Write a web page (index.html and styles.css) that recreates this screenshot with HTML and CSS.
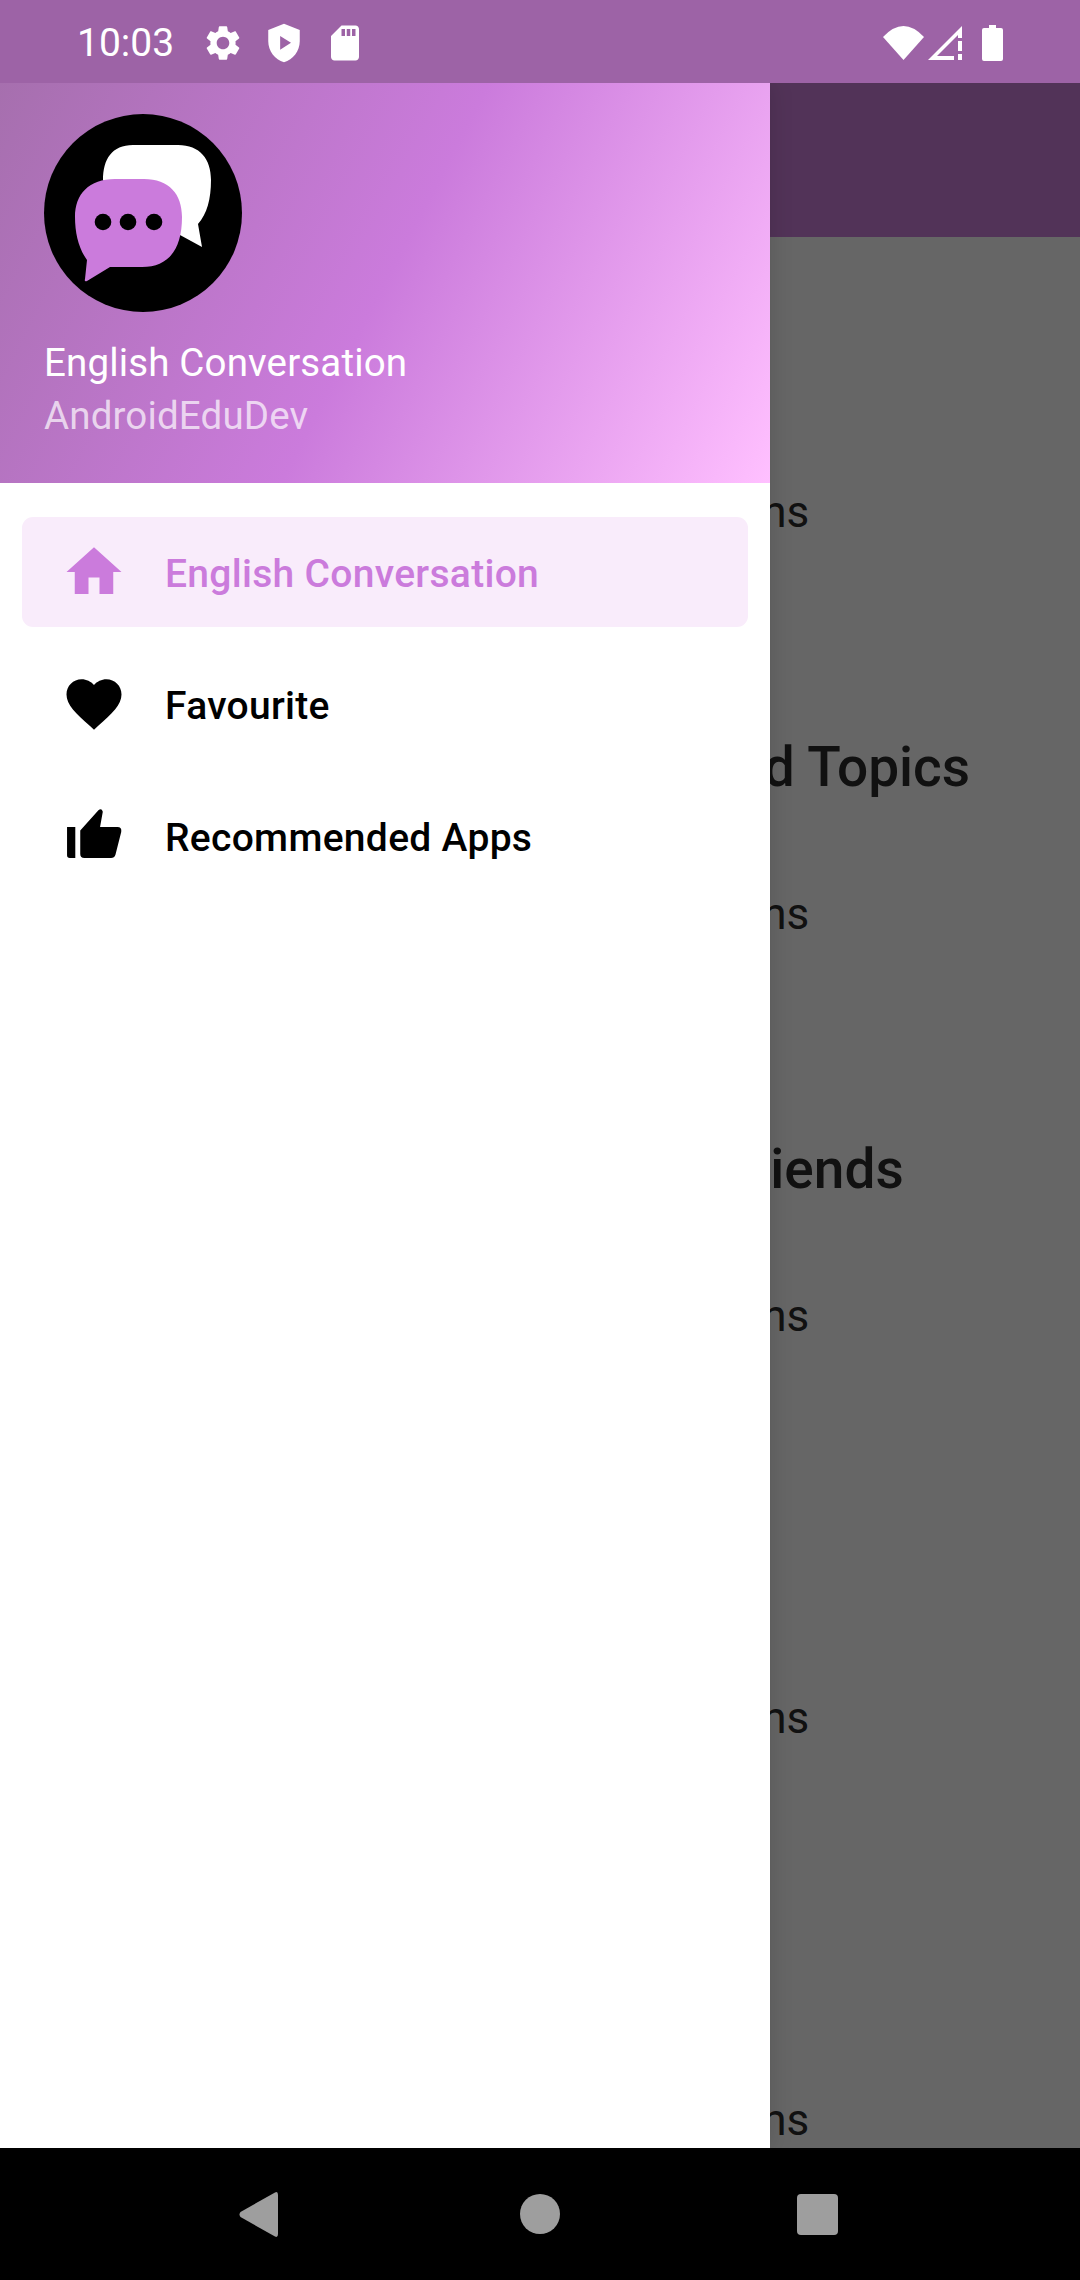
FILE: index.html
```html
<!DOCTYPE html>
<html lang="en">
<head>
    <meta charset="UTF-8">
    <meta name="viewport" content="width=device-width, initial-scale=1.0">
    <title>English Conversation</title>
    <link rel="stylesheet" href="styles.css">
</head>
<body>
    <div class="phone">
        <!-- Status bar -->
        <div class="status-bar">
            <span class="clock">10:03</span>
            <svg class="status-icon" viewBox="0 0 24 24"><path d="M19.14 12.94c.04-.3.06-.61.06-.94 0-.32-.02-.64-.07-.94l2.03-1.58c.18-.14.23-.41.12-.61l-1.92-3.32c-.12-.22-.37-.29-.59-.22l-2.39.96c-.5-.38-1.03-.7-1.62-.94l-.36-2.54c-.04-.24-.24-.41-.48-.41h-3.84c-.24 0-.43.17-.47.41l-.36 2.54c-.59.24-1.13.57-1.62.94l-2.39-.96c-.22-.08-.47 0-.59.22L2.74 8.87c-.12.21-.08.47.12.61l2.03 1.58c-.05.3-.09.63-.09.94s.02.64.07.94l-2.03 1.58c-.18.14-.23.41-.12.61l1.92 3.32c.12.22.37.29.59.22l2.39-.96c.5.38 1.03.7 1.62.94l.36 2.54c.05.24.24.41.48.41h3.84c.24 0 .44-.17.47-.41l.36-2.54c.59-.24 1.13-.56 1.62-.94l2.39.96c.22.08.47 0 .59-.22l1.92-3.32c.12-.22.07-.47-.12-.61l-2.01-1.58zM12 15.6c-1.98 0-3.6-1.62-3.6-3.6s1.62-3.6 3.6-3.6 3.6 1.62 3.6 3.6-1.62 3.6-3.6 3.6z"/></svg>
            <svg class="status-icon" viewBox="0 0 24 24"><path fill-rule="evenodd" d="M12 1L3 4.500v6.500c0 5.500 3.800 10.500 9 12 5.200-1.500 9-6.500 9-12V4.500zM9.800 8v7.800l6.200-3.900z"/></svg>
            <svg class="status-icon" viewBox="0 0 24 24"><path d="M18 2h-8L4 8v12c0 1.100.900 2 2 2h12c1.100 0 2-.900 2-2V4c0-1.100-.900-2-2-2zm-6 6h-2V4h2v4zm3 0h-2V4h2v4zm3 0h-2V4h2v4z"/></svg>
            <div class="status-right">
                <svg class="wifi" viewBox="0 0 41 34"><path d="M0 11Q20.500-11 41 11L20.500 34z"/></svg>
                <svg class="signal" viewBox="0 0 34 34"><path d="M0 34L34 0V12H30V9L9 30H26V34z"/><rect x="30" y="15" width="4" height="10"/><rect x="30" y="28" width="4" height="6"/></svg>
                <svg class="battery" viewBox="0 0 21 36"><path d="M7 0h7v3h5q2 0 2 2v29q0 2-2 2H2q-2 0-2-2V5q0-2 2-2h5z"/></svg>
            </div>
        </div>

        <div class="app-bar"></div>

        <!-- Lesson list behind the drawer -->
        <div class="lessons">
            <div class="lesson">
                <div class="lesson-title">Family</div>
                <div class="lesson-count">50 Questions</div>
            </div>
            <div class="lesson">
                <div class="lesson-title">Advanced Topics</div>
                <div class="lesson-count">50 Questions</div>
            </div>
            <div class="lesson">
                <div class="lesson-title">Online Friends</div>
                <div class="lesson-count">50 Questions</div>
            </div>
            <div class="lesson">
                <div class="lesson-title">At Work</div>
                <div class="lesson-count">50 Questions</div>
            </div>
            <div class="lesson">
                <div class="lesson-title">Travel</div>
                <div class="lesson-count">50 Questions</div>
            </div>
        </div>

        <div class="scrim"></div>

        <!-- Navigation drawer -->
        <div class="drawer">
            <div class="drawer-header">
                <svg class="avatar" viewBox="0 0 198 198">
                    <circle cx="99" cy="99" r="99" fill="#000"/>
                    <path fill="#fff" d="M89 31H134C156 31 167 45 167 66C167 85 163 100 154 110L158 133L125 115L70 80L59 66C59 45 68 31 89 31Z"/>
                    <path fill="#cb7bdc" d="M71 65H100C125 65 138 80 138 103C138 135 125 153 98 153H66L43 167Q40 168 41 165L43 146C35 135 31 120 31 103C31 80 45 65 71 65Z"/>
                    <circle cx="59" cy="108" r="8.300"/>
                    <circle cx="84" cy="108" r="8.300"/>
                    <circle cx="110" cy="108" r="8.300"/>
                </svg>
                <div class="app-name">English Conversation</div>
                <div class="app-author">AndroidEduDev</div>
            </div>
            <div class="menu">
                <div class="menu-item active">
                    <svg class="menu-icon" viewBox="0 0 24 24"><path d="M10 20v-6h4v6h5v-8h3L12 3 2 12h3v8z"/></svg>
                    <span class="menu-label">English Conversation</span>
                </div>
                <div class="menu-item">
                    <svg class="menu-icon" viewBox="0 0 24 24"><path d="M12 21.350l-1.450-1.320C5.400 15.360 2 12.280 2 8.500 2 5.420 4.420 3 7.500 3c1.740 0 3.410.810 4.500 2.090C13.090 3.810 14.760 3 16.500 3 19.580 3 22 5.420 22 8.500c0 3.780-3.400 6.860-8.550 11.540L12 21.350z"/></svg>
                    <span class="menu-label">Favourite</span>
                </div>
                <div class="menu-item">
                    <svg class="menu-icon" viewBox="0 0 24 24"><path d="M2.200 8.700h3V20h-2a1 1 0 0 1-1-1zM7 10L13.600 2.600Q14.800 1.800 15.200 3.200L14.200 8.700H20.500Q22.200 8.700 21.900 10.500L19.800 18.800Q19.400 20 18.200 20H8.500Q7 20 7 18.500z"/></svg>
                    <span class="menu-label">Recommended Apps</span>
                </div>
            </div>
        </div>

        <!-- Android navigation bar -->
        <div class="nav-bar">
            <svg class="nav-back" viewBox="0 0 39 45"><path d="M36 0.500Q39-1 39 3V42Q39 46 36 44.500L1.500 25Q-0.500 22.500 1.500 20z"/></svg>
            <div class="nav-home"></div>
            <div class="nav-recent"></div>
        </div>
    </div>
</body>
</html>
```

FILE: styles.css
```css
* {
    box-sizing: border-box;
}

body {
    margin: 0;
    font-family: Roboto, "Noto Sans", sans-serif;
    background-color: #000;
}

.phone {
    position: relative;
    display: flex;
    flex-direction: column;
    width: 1080px;
    height: 2280px;
    overflow: hidden;
    background-color: #fff;
}

/* Status bar */
.status-bar {
    position: relative;
    z-index: 3;
    display: flex;
    align-items: center;
    flex: none;
    height: 83px;
    padding: 3px 77px 0;
    color: #fff;
    background-color: #9d63a6;
}

.clock {
    width: 125px;
    font-size: 39px;
}

.status-icon {
    width: 42px;
    height: 42px;
    margin-right: 19px;
    fill: #fff;
}

.status-right {
    display: flex;
    align-items: center;
    margin-left: auto;
    fill: #fff;
}

.wifi {
    width: 41px;
    height: 34px;
}

.signal {
    width: 34px;
    height: 34px;
    margin-left: 4px;
}

.battery {
    width: 21px;
    height: 36px;
    margin-left: 20px;
}

.app-bar {
    flex: none;
    height: 154px;
    background-color: #cd80dc;
}

/* Lessons */
.lessons {
    flex: 1;
    min-height: 0;
    overflow: hidden;
    color: #2b2b2b;
}

.lesson {
    height: 402px;
    padding: 96px 0 0 551px;
}

.lesson-title {
    font-size: 55px;
    font-weight: 500;
    line-height: 65px;
    white-space: nowrap;
}

.lesson-count {
    margin-top: 88px;
    font-size: 44px;
    line-height: 52px;
    white-space: nowrap;
}

.scrim {
    position: absolute;
    top: 83px;
    left: 0;
    right: 0;
    bottom: 132px;
    background-color: rgba(0, 0, 0, 0.6);
}

/* Drawer */
.drawer {
    position: absolute;
    top: 83px;
    left: 0;
    bottom: 132px;
    width: 770px;
    background-color: #fff;
    box-shadow: 0 0 22px rgba(0, 0, 0, 0.15);
}

.drawer-header {
    height: 400px;
    padding: 31px 44px 0;
    color: #fff;
    background: linear-gradient(117.500deg, #a66fae 0%, #cb7bdc 50%, #ffc0ff 100%);
}

.avatar {
    display: block;
    width: 198px;
    height: 198px;
}

.app-name {
    margin-top: 24px;
    font-size: 38.5px;
    line-height: 54px;
    letter-spacing: 0.15px;
}

.app-author {
    margin-top: -1px;
    font-size: 38.5px;
    line-height: 54px;
    letter-spacing: 0.15px;
    color: rgba(255, 255, 255, 0.7);
}

.menu {
    display: flex;
    flex-direction: column;
    gap: 22px;
    padding: 34px 22px 0;
}

.menu-item {
    display: flex;
    align-items: center;
    gap: 38px;
    height: 110px;
    padding-left: 39px;
    border-radius: 11px;
    font-size: 39px;
    font-weight: 500;
    letter-spacing: 0.3px;
    color: #000;
}

.menu-label {
    padding-top: 4px;
}

.menu-item.active {
    color: #cb7bdc;
    background-color: #f9ecfb;
}

.menu-icon {
    width: 66px;
    height: 66px;
    fill: currentColor;
}

/* Navigation bar */
.nav-bar {
    position: relative;
    z-index: 3;
    display: flex;
    align-items: center;
    flex: none;
    height: 132px;
    padding-left: 239px;
    background-color: #000;
}

.nav-back {
    width: 39px;
    height: 45px;
    fill: #9e9e9e;
}

.nav-home {
    width: 40px;
    height: 40px;
    margin-left: 242px;
    border-radius: 50%;
    background-color: #9e9e9e;
}

.nav-recent {
    width: 41px;
    height: 41px;
    margin-left: 237px;
    border-radius: 4px;
    background-color: #9e9e9e;
}
```
